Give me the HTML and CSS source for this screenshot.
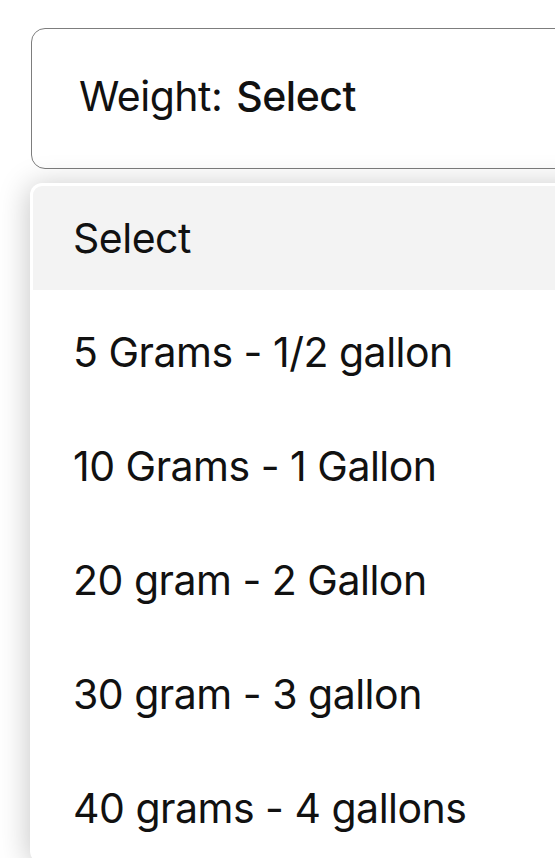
FILE: index.html
```html
<!DOCTYPE html>
<html>
  <head>
    <title>Weight</title>
    <link rel="stylesheet" href="styles.css">
  </head>
  <body>
    <div class="field">
      <span class="label">Weight:</span>
      <span class="value">Select</span>
    </div>
    <ul class="menu">
      <li class="option active">Select</li>
      <li class="option">5 Grams - 1/2 gallon</li>
      <li class="option">10 Grams - 1 Gallon</li>
      <li class="option">20 gram - 2 Gallon</li>
      <li class="option">30 gram - 3 gallon</li>
      <li class="option">40 grams - 4 gallons</li>
    </ul>
  </body>
</html>
```

FILE: styles.css
```css
body { margin: 0; overflow: hidden; background: #fff; color: #111; font-family: Inter, "Liberation Sans", sans-serif; font-size: 41px; letter-spacing: -0.5px; }

.field { box-sizing: border-box; width: 600px; height: 141px; margin: 28px 0 0 31px; padding: 0 0 6px 47px; display: flex; align-items: center; gap: 14px; border: 1.5px solid #7d7d7d; border-radius: 14px; }
.field .value { font-weight: 500; }

.menu { box-sizing: border-box; width: 600px; margin: 14px 0 0 30px; padding: 3px; list-style: none; display: flex; flex-direction: column; gap: 10px; background: #fff; border-radius: 12px; box-shadow: -2px 2px 30px rgba(0, 0, 0, 0.22); }
.option { height: 104px; padding-left: 40px; display: flex; align-items: center; }
.option.active { background: #f3f3f3; border-radius: 9px 0 0 0; }
```
